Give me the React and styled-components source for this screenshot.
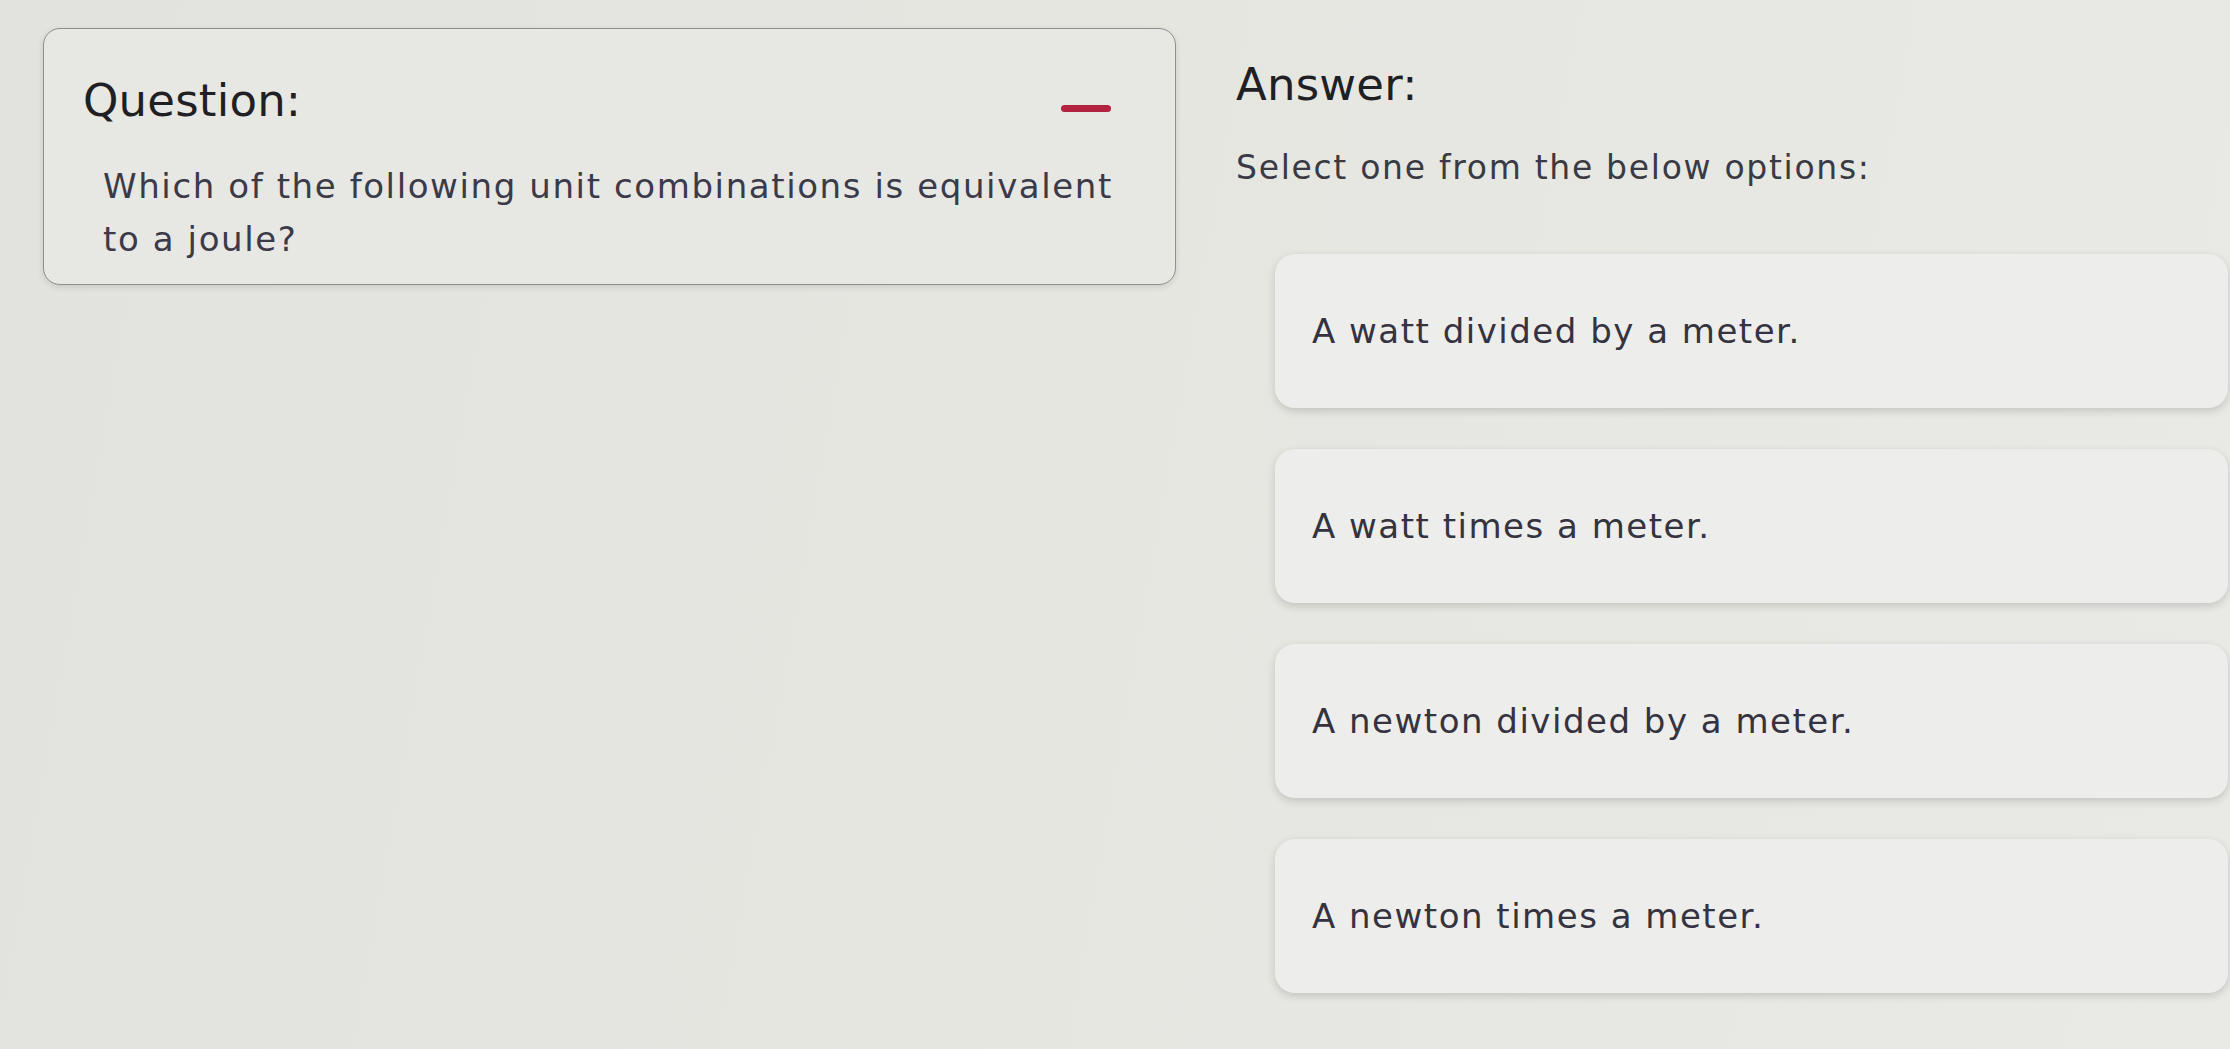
import React from "react";
import styled, { createGlobalStyle } from "styled-components";

const options = [
  "A watt divided by a meter.",
  "A watt times a meter.",
  "A newton divided by a meter.",
  "A newton times a meter.",
];

const GlobalStyle = createGlobalStyle`
  html, body {
    margin: 0;
    padding: 0;
    height: 100%;
  }
  body {
    background: linear-gradient(100deg, #e2e3de 0%, #e6e6e1 45%, #e9e9e5 100%);
    font-family: "DejaVu Sans", "Open Sans", sans-serif;
    -webkit-font-smoothing: antialiased;
  }
`;

const Page = styled.main`
  display: flex;
  align-items: flex-start;
  gap: 60px;
  width: 2230px;
  height: 1049px;
  padding: 28px 2px 0 43px;
  box-sizing: border-box;
`;

const QuestionCard = styled.section`
  width: 1133px;
  flex-shrink: 0;
  box-sizing: border-box;
  padding: 41px 24px 18px 39px;
  background: #e7e7e3;
  border: 1.5px solid #8e8f8f;
  border-radius: 17px;
  box-shadow: 0 2px 6px rgba(0, 0, 0, 0.12);
`;

const CardHeader = styled.div`
  display: flex;
  align-items: center;
  justify-content: space-between;
  padding-right: 40px;
`;

const Heading = styled.h2`
  margin: 0;
  font-size: 45px;
  font-weight: 400;
  line-height: 62px;
  color: #1f1f24;
  letter-spacing: 0.2px;
`;

const Collapse = styled.span`
  display: block;
  width: 50px;
  height: 7px;
  border-radius: 4px;
  background: #b3223f;
  margin-top: 14px;
`;

const QuestionText = styled.p`
  margin: 28px 0 0 20px;
  font-size: 34px;
  line-height: 53px;
  color: #3b3a49;
  letter-spacing: 1.6px;
`;

const AnswerColumn = styled.section`
  flex: 1;
  display: flex;
  flex-direction: column;
  padding-top: 26px;
`;

const Hint = styled.p`
  margin: 30px 0 0;
  font-size: 33px;
  line-height: 44px;
  color: #3a3a45;
  letter-spacing: 1.7px;
`;

const OptionList = styled.div`
  display: flex;
  flex-direction: column;
  gap: 41px;
  margin: 64px 0 0 39px;
`;

const Option = styled.button`
  display: flex;
  align-items: center;
  height: 154px;
  padding: 0 37px;
  border: none;
  border-radius: 20px;
  background: #ededeb;
  box-shadow: 0 3px 8px rgba(0, 0, 0, 0.16);
  font-family: inherit;
  font-size: 34px;
  color: #34333f;
  letter-spacing: 1.5px;
  text-align: left;
  cursor: pointer;
`;

export default function App() {
  return (
    <>
      <GlobalStyle />
      <Page>
        <QuestionCard>
          <CardHeader>
            <Heading>Question:</Heading>
            <Collapse />
          </CardHeader>
          <QuestionText>
            Which of the following unit combinations is equivalent to a joule?
          </QuestionText>
        </QuestionCard>
        <AnswerColumn>
          <Heading>Answer:</Heading>
          <Hint>Select one from the below options:</Hint>
          <OptionList>
            {options.map((text) => (
              <Option key={text}>{text}</Option>
            ))}
          </OptionList>
        </AnswerColumn>
      </Page>
    </>
  );
}
